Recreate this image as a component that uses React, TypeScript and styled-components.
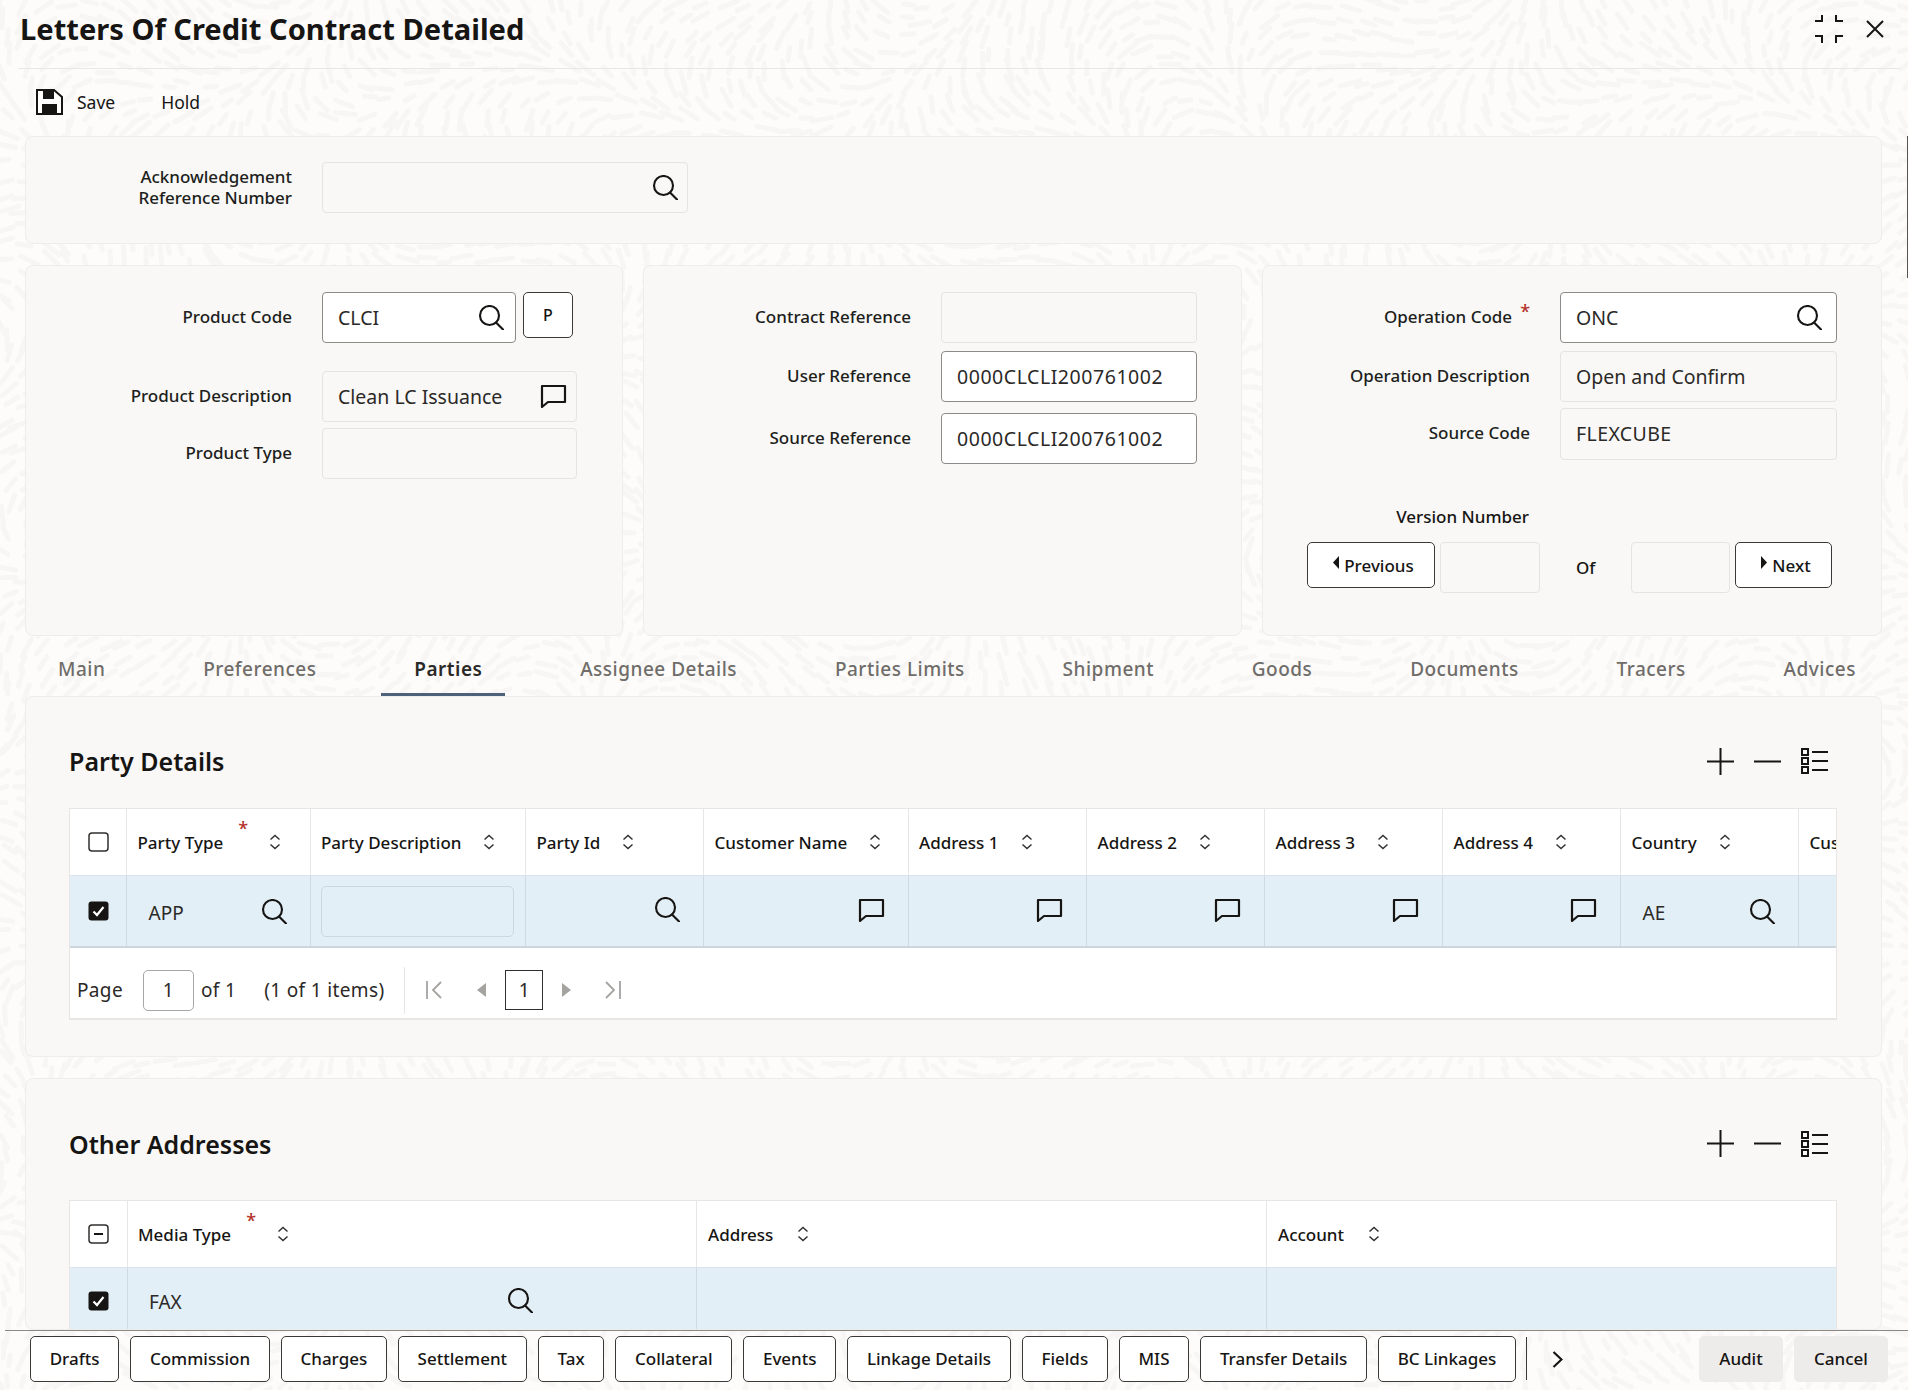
import React, { useMemo } from "react";
import styled, { createGlobalStyle } from "styled-components";

const Global = createGlobalStyle`
  html, body { margin: 0; padding: 0; background: #fdfcfb; }
  * { box-sizing: border-box; }
  body { font-family: "Noto Sans", "Liberation Sans", sans-serif; color: #161513; }
`;

const Page = styled.div`
  position: relative; width: 1908px; height: 1390px; overflow: hidden;
  display: flex; flex-direction: column;
`;
const Backdrop = styled.svg`position: absolute; inset: 0; z-index: 0;`;
const Layer = styled.div`
  position: relative; z-index: 1; flex: 1; min-height: 0; overflow: hidden;
  display: flex; flex-direction: column;
  & > * { flex-shrink: 0; }
`;
const Header = styled.header`
  height: 69px; margin: 0 9px 0 18px; border-bottom: 1px solid #e9e7e5;
  display: flex; align-items: flex-start; justify-content: space-between;
`;
const Title = styled.h1`
  margin: 10px 0 0 2px; font-size: 29.1px; line-height: 38px; font-weight: 700;
`;
const WindowIcons = styled.div`display: flex; gap: 23px; margin: 15px 15px 0 0; align-items: center;`;
const Toolbar = styled.div`
  height: 67px; padding: 0 0 2px 36px; display: flex; align-items: center;
`;
const ToolText = styled.span<{ $ml: number }>`
  margin-left: ${p => p.$ml}px; font-size: 17.5px; line-height: 24px;
`;
const Panel = styled.section<{ $h?: number }>`
  background: #f9f8f6; border: 1px solid #efedeb; border-radius: 8px;
  ${p => (p.$h ? `height: ${p.$h}px;` : "")}
`;
const TopPanel = styled(Panel)`margin: 0 26px 0 25px; padding-top: 25px;`;
const Columns = styled.div`
  display: flex; gap: 20px; margin: 21px 26px 0 25px;
`;
const Column = styled(Panel)<{ $w: number }>`width: ${p => p.$w}px; padding-top: 26px;`;
const Row = styled.div<{ $mt?: number }>`
  display: flex; align-items: flex-start; margin-top: ${p => p.$mt ?? 0}px;
`;
const Label = styled.label<{ $w: number; $pt?: number }>`
  width: ${p => p.$w}px; flex-shrink: 0; margin-right: 30px; text-align: right;
  font-size: 17px; line-height: 21px; padding-top: ${p => p.$pt ?? 13.5}px; font-weight: 500; color: #201e1c;
`;
const Star = styled.span`
  display: inline-block; color: #b3312a; font-size: 18px; line-height: 0; position: relative;
`;
const LabelStar = styled(Star)`margin-left: 8px; top: -5px;`;
const Input = styled.div<{ $w: number; $h?: number; $on?: boolean; $strong?: boolean; $pr?: number; $ls?: number; $ml?: number }>`
  width: ${p => p.$w}px; height: ${p => p.$h ?? 51}px; flex-shrink: 0;
  margin-left: ${p => p.$ml ?? 0}px;
  border-radius: 4px; padding: 0 ${p => p.$pr ?? 14}px 1px 15px;
  border: 1px solid ${p => (p.$strong ? "#8d8b88" : "#e6e4e1")};
  background: ${p => (p.$on ? "#fff" : "#f9f8f6")};
  display: flex; align-items: center; justify-content: space-between;
  font-size: 19.5px; letter-spacing: ${p => p.$ls ?? 0}px; color: #2b2927;
`;
const Button = styled.button<{ $w?: number; $ml?: number; $pl?: number }>`
  height: 46px; ${p => (p.$w ? `width: ${p.$w}px;` : "")}
  margin-left: ${p => p.$ml ?? 0}px;
  flex-shrink: 0; border: 1px solid #3a3937; border-radius: 5px; background: #fff;
  font: 500 17px "Noto Sans", sans-serif; color: #161513; padding: 0 0 0 ${p => p.$pl ?? 0}px;
  display: inline-flex; align-items: center; justify-content: center; gap: 5px;
`;
const PBtn = styled(Button)`font-size: 16px;`;
const TriUp = styled.span`display: inline-flex; margin-top: -5px;`;
const Version = styled.div`
  display: flex; align-items: flex-start; margin: 0 0 0 44px;
`;
const VersionLabel = styled.div`
  margin: 45px 0 13px; padding-right: 352px; text-align: right; font-size: 17px; line-height: 24px; font-weight: 500;
`;
const OfText = styled.span`
  width: 91px; padding: 14px 0 0 36px; font-size: 17px; line-height: 24px; font-weight: 500;
`;
const Tabs = styled.nav`
  height: 60px; margin-left: 58px; padding: 20px 0 0 0; display: flex; gap: 97.8px;
`;
const Tab = styled.span<{ $on?: boolean }>`
  position: relative; font-size: 19px; letter-spacing: 0.5px; line-height: 26px; height: 40px; white-space: nowrap;
  color: ${p => (p.$on ? "#2a2826" : "#6f6c69")}; font-weight: ${p => (p.$on ? 600 : 500)};
  ${p => p.$on ? `&::after { content: ""; position: absolute; left: -33px; right: -23px; bottom: 0; height: 3px; background: #4f6079; }` : ""}
`;
const SectionPanel = styled(Panel)<{ $mt?: number }>`
  margin: ${p => p.$mt ?? 0}px 26px 0 25px; padding: 0 44px 0 43px;
`;
const SectionHead = styled.div<{ $h: number; $pt: number }>`
  height: ${p => p.$h}px; padding-top: ${p => p.$pt}px;
  display: flex; align-items: center; justify-content: space-between;
`;
const SectionTitle = styled.h2`
  margin: 0; font-size: 25px; line-height: 32px; font-weight: 600;
`;
const Tools = styled.div`display: flex; align-items: center; gap: 20px; margin-right: 9px;`;
const Table = styled.div`
  background: #fff; border: 1px solid #e8e6e4; border-bottom-width: 2px; overflow: hidden;
`;
const BareTable = styled(Table)`border-bottom: 0;`;
const TRow = styled.div<{ $h: number; $sel?: boolean }>`
  display: flex; height: ${p => p.$h}px; width: max-content;
  background: ${p => (p.$sel ? "#e3eff6" : "#fff")};
  ${p => (p.$sel ? "border-top: 1px solid #dde4e9;" : "")}
`;
const BottomRule = styled.div`height: 2px; background: #cdd6dc;`;
const Cell = styled.div<{ $w: number; $sel?: boolean; $pt?: number }>`
  width: ${p => p.$w}px; flex-shrink: 0; display: flex; align-items: center; position: relative;
  padding-top: ${p => p.$pt ?? 0}px;
  border-right: 1px solid ${p => (p.$sel ? "#cfdae1" : "#e8e6e4")};
`;
const HeadCell = styled(Cell)<{ $pl?: number }>`
  padding-left: ${p => p.$pl ?? 10.5}px; font-size: 17px; font-weight: 500; white-space: nowrap;
`;
const CheckCell = styled(Cell)`padding-left: 18px;`;
const BodyCell = styled(Cell)`
  padding-left: 21.5px; padding-right: 23px; justify-content: space-between; font-size: 19px; color: #2b2927;
`;
const StartCell = styled(BodyCell)`justify-content: flex-start;`;
const EndCell = styled(BodyCell)`justify-content: flex-end; padding-bottom: 3px;`;
const CellInput = styled.div`
  width: 193px; height: 51px; flex-shrink: 0; margin-left: -11px; border: 1px solid #ccd7de; border-radius: 5px; background: #e3eff6;
`;
const CellText = styled.span`padding-top: 3px;`;
const HeadStar = styled(Star)`margin: 0 0 0 15px; width: 9px; top: -14px;`;
const SortWrap = styled.span<{ $ml?: number }>`
  margin-left: ${p => p.$ml ?? 22}px; display: inline-flex;
`;
const Pager = styled.div`
  height: 70px; display: flex; align-items: center; padding: 14px 0 0 7px; font-size: 19px; letter-spacing: 0.35px; color: #2b2927;
`;
const PagerInput = styled.div`
  width: 51px; height: 41px; margin-left: 20px; border: 1px solid #a9a7a4; border-radius: 5px;
  display: flex; align-items: center; justify-content: center;
`;
const PagerItems = styled.span`margin-left: 28px;`;
const PagerOf = styled.span`margin-left: 7px;`;
const PagerDivider = styled.div`width: 1px; height: 47px; background: #e8e6e4; margin: 0 21px 0 20px;`;
const PageBox = styled.div`
  width: 38px; height: 40px; margin: 0 19px; border: 1px solid #2f2e2c;
  display: flex; align-items: center; justify-content: center;
`;
const PageNav = styled.span<{ $ml?: number; $mr?: number }>`
  display: inline-flex; margin-left: ${p => p.$ml ?? 0}px; margin-right: ${p => p.$mr ?? 0}px;
`;
const Footer = styled.footer`
  position: relative; z-index: 2; height: 60px; flex-shrink: 0; margin-left: 5px;
  border-top: 1px solid #8b8986; padding: 5px 20px 0 25px;
  display: flex; align-items: flex-start; gap: 11px;
`;
const FootBtn = styled(Button)`padding: 0 18.7px 2px; white-space: nowrap;`;
const FootDivider = styled.div`width: 1px; height: 43px; background: #3a3937; margin: 1px 0 0 -1px;`;
const Chevron = styled.span`display: inline-flex; margin: 15px 0 0 14px;`;
const FootSpacer = styled.div`flex: 1;`;
const GhostBtn = styled.button<{ $w: number }>`
  height: 46px; width: ${p => p.$w}px; border: 0; border-radius: 5px; background: #eeecea;
  font: 500 17px "Noto Sans", sans-serif; color: #161513; padding: 0 0 2px;
`;
const ScrollEdge = styled.div`
  position: absolute; z-index: 3; top: 136px; right: 0; width: 1px; height: 142px; background: #55534f;
`;
const Ico = styled.svg`display: block; flex-shrink: 0;`;

const Search = () => (
  <Ico width="26" height="25" viewBox="0 0 26 25" fill="none" stroke="#161513" strokeWidth="2.1">
    <ellipse cx="11.5" cy="10.5" rx="9.5" ry="9.5" />
    <path d="M18 17.5L25 24.5" strokeLinecap="round" />
  </Ico>
);
const Msg = () => (
  <Ico width="27" height="24" viewBox="0 0 27 24" fill="none" stroke="#161513" strokeWidth="2.2" strokeLinejoin="round">
    <path d="M2 2H25V18H8L2 23Z" />
  </Ico>
);
const Sort = () => (
  <Ico width="12" height="16" viewBox="0 0 12 16" fill="none" stroke="#33312f" strokeWidth="1.5">
    <path d="M1.5 5.5L6 1.5L10.5 5.5M1.5 10.5L6 14.5L10.5 10.5" />
  </Ico>
);
const SortS = ({ ml }: { ml?: number }) => <SortWrap $ml={ml}><Sort /></SortWrap>;
const Check = ({ on, minus }: { on?: boolean; minus?: boolean }) => (
  <Ico width="21" height="20" viewBox="0 0 21 20">
    {on ? (
      <>
        <rect x="0.5" y="0.5" width="20" height="19" rx="3" fill="#161513" />
        <path d="M5.5 10.5L9 14L15.5 6" fill="none" stroke="#fff" strokeWidth="2.2" />
      </>
    ) : (
      <>
        <rect x="1" y="1" width="19" height="18" rx="3" fill="#fff" stroke="#33312f" strokeWidth="1.5" />
        {minus && <path d="M6 10H15" stroke="#161513" strokeWidth="2" />}
      </>
    )}
  </Ico>
);
const SaveIcon = () => (
  <Ico width="27" height="26" viewBox="0 0 27 26">
    <path d="M1 1H18L26 8V25H1Z" fill="#fff" stroke="#161513" strokeWidth="2" />
    <rect x="7" y="1" width="11" height="9" fill="#161513" />
    <rect x="6" y="15" width="15" height="10" fill="#161513" />
  </Ico>
);
const Collapse = () => (
  <Ico width="28" height="28" viewBox="0 0 28 28" fill="none" stroke="#161513" strokeWidth="2">
    <path d="M0 6H7V0M21 0V6H28M0 21H7V28M21 28V21H28" />
  </Ico>
);
const Close = () => (
  <Ico width="18" height="18" viewBox="0 0 18 18" fill="none" stroke="#161513" strokeWidth="2">
    <path d="M1 1L17 17M17 1L1 17" />
  </Ico>
);
const Plus = () => (
  <Ico width="27" height="27" viewBox="0 0 27 27" fill="none" stroke="#161513" strokeWidth="2"><path d="M0 13.5H27M13.5 0V27" /></Ico>
);
const Minus = () => (
  <Ico width="27" height="27" viewBox="0 0 27 27" fill="none" stroke="#161513" strokeWidth="2"><path d="M0 13.5H27" /></Ico>
);
const ListIcon = () => (
  <Ico width="27" height="26" viewBox="0 0 27 26" fill="none" stroke="#161513" strokeWidth="2">
    <rect x="1" y="1" width="6" height="6" /><rect x="1" y="10" width="6" height="6" /><rect x="1" y="19" width="6" height="6" />
    <path d="M11 4H27M11 13H27M11 22H27" />
  </Ico>
);
const First = () => (
  <Ico width="16" height="18" viewBox="0 0 16 18" fill="none" stroke="#a5a3a0" strokeWidth="1.8"><path d="M1 0V18M15 1L7 9L15 17" /></Ico>
);
const Last = () => (
  <Ico width="16" height="18" viewBox="0 0 16 18" fill="none" stroke="#a5a3a0" strokeWidth="1.8"><path d="M15 0V18M1 1L9 9L1 17" /></Ico>
);
const Tri = ({ right, c = "#a5a3a0", w = 9, h = 14 }: { right?: boolean; c?: string; w?: number; h?: number }) => (
  <Ico width={w} height={h} viewBox="0 0 9 14" preserveAspectRatio="none"><path d={right ? "M0 0L9 7L0 14Z" : "M9 0L0 7L9 14Z"} fill={c} /></Ico>
);
const ChevronIcon = () => (
  <Ico width="11" height="17" viewBox="0 0 11 17" fill="none" stroke="#161513" strokeWidth="2.2"><path d="M1.5 1L9.5 8.5L1.5 16" /></Ico>
);

const Pattern = () => {
  const d = useMemo(() => {
    let seed = 7;
    const rnd = () => { seed = (seed * 16807) % 2147483647; return seed / 2147483647; };
    const parts: string[] = [];
    for (let y = 0; y < 1400; y += 16) {
      for (let x = 0; x < 1920; x += 20) {
        const px = x + rnd() * 12;
        const py = y + rnd() * 9;
        const a = Math.sin(px / 95) * 1.7 + Math.cos(py / 70) * 1.5 + Math.sin((px + py) / 210) * 1.2;
        const l = 5 + rnd() * 6;
        const dx = Math.cos(a) * l;
        const dy = Math.sin(a) * l;
        parts.push(`M${(px - dx).toFixed(1)} ${(py - dy).toFixed(1)}L${(px + dx).toFixed(1)} ${(py + dy).toFixed(1)}`);
      }
    }
    return parts.join("");
  }, []);
  return (
    <Backdrop width="1908" height="1390" viewBox="0 0 1908 1390" fill="none">
      <path d={d} stroke="#f7f6f4" strokeWidth="5" strokeLinecap="round" />
    </Backdrop>
  );
};

const partyCols = [
  { t: "Party Type", w: 183.5, star: true },
  { t: "Party Description", w: 215.5 },
  { t: "Party Id", w: 178 },
  { t: "Customer Name", w: 204.5 },
  { t: "Address 1", w: 178.5 },
  { t: "Address 2", w: 178 },
  { t: "Address 3", w: 178 },
  { t: "Address 4", w: 178 },
  { t: "Country", w: 178 },
];
const footBtns = ["Drafts", "Commission", "Charges", "Settlement", "Tax", "Collateral", "Events", "Linkage Details", "Fields", "MIS", "Transfer Details", "BC Linkages"];
const tabs = ["Main", "Preferences", "Parties", "Assignee Details", "Parties Limits", "Shipment", "Goods", "Documents", "Tracers", "Advices"];

export default function App() {
  return (
    <Page>
      <Global />
      <Pattern />
      <ScrollEdge />
      <Layer>
        <Header>
          <Title>Letters Of Credit Contract Detailed</Title>
          <WindowIcons><Collapse /><Close /></WindowIcons>
        </Header>
        <Toolbar>
          <SaveIcon />
          <ToolText $ml={14}>Save</ToolText>
          <ToolText $ml={46}>Hold</ToolText>
        </Toolbar>
        <TopPanel $h={108}>
          <Row>
            <Label $w={266} $pt={3.5}>Acknowledgement<br />Reference Number</Label>
            <Input $w={366} $pr={9}><span /><Search /></Input>
          </Row>
        </TopPanel>
        <Columns>
          <Column $w={598} $h={371}>
            <Row>
              <Label $w={266}>Product Code</Label>
              <Input $w={194} $on $strong $pr={11}>CLCI<Search /></Input>
              <PBtn $w={50} $ml={7}>P</PBtn>
            </Row>
            <Row $mt={28}>
              <Label $w={266}>Product Description</Label>
              <Input $w={255} $pr={9}>Clean LC Issuance<Msg /></Input>
            </Row>
            <Row $mt={6}>
              <Label $w={266}>Product Type</Label>
              <Input $w={255} />
            </Row>
          </Column>
          <Column $w={599} $h={371}>
            <Row>
              <Label $w={267}>Contract Reference</Label>
              <Input $w={256} />
            </Row>
            <Row $mt={8}>
              <Label $w={267}>User Reference</Label>
              <Input $w={256} $on $strong $ls={0.55}>0000CLCLI200761002</Input>
            </Row>
            <Row $mt={11}>
              <Label $w={267}>Source Reference</Label>
              <Input $w={256} $on $strong $ls={0.55}>0000CLCLI200761002</Input>
            </Row>
          </Column>
          <Column $w={620} $h={371}>
            <Row>
              <Label $w={267}>Operation Code<LabelStar>*</LabelStar></Label>
              <Input $w={277} $on $strong>ONC<Search /></Input>
            </Row>
            <Row $mt={8}>
              <Label $w={267}>Operation Description</Label>
              <Input $w={277}>Open and Confirm</Input>
            </Row>
            <Row $mt={6}>
              <Label $w={267}>Source Code</Label>
              <Input $w={277} $h={52} $ls={0.4}>FLEXCUBE</Input>
            </Row>
            <VersionLabel>Version Number</VersionLabel>
            <Version>
              <Button $w={128} $pl={5}><TriUp><Tri c="#161513" w={6} h={13} /></TriUp>Previous</Button>
              <Input $w={100} $ml={5} />
              <OfText>Of</OfText>
              <Input $w={99} />
              <Button $w={97} $ml={5} $pl={5}><TriUp><Tri right c="#161513" w={6} h={13} /></TriUp>Next</Button>
            </Version>
          </Column>
        </Columns>
        <Tabs>
          {tabs.map(t => <Tab key={t} $on={t === "Parties"}>{t}</Tab>)}
        </Tabs>
        <SectionPanel $h={361}>
          <SectionHead $h={111} $pt={17}>
            <SectionTitle>Party Details</SectionTitle>
            <Tools><Plus /><Minus /><ListIcon /></Tools>
          </SectionHead>
          <Table>
            <TRow $h={66}>
              <CheckCell $w={57}><Check /></CheckCell>
              {partyCols.map(c => (
                <HeadCell key={c.t} $w={c.w}>
                  {c.t}{c.star && <HeadStar>*</HeadStar>}<SortS />
                </HeadCell>
              ))}
              <HeadCell $w={178}>Customer</HeadCell>
            </TRow>
            <TRow $h={71} $sel>
              <CheckCell $w={57} $sel><Check on /></CheckCell>
              <BodyCell $w={183.5} $sel><CellText>APP</CellText><Search /></BodyCell>
              <BodyCell $w={215.5} $sel><CellInput /></BodyCell>
              <EndCell $w={178} $sel><Search /></EndCell>
              <EndCell $w={204.5} $sel><Msg /></EndCell>
              <EndCell $w={178.5} $sel><Msg /></EndCell>
              <EndCell $w={178} $sel><Msg /></EndCell>
              <EndCell $w={178} $sel><Msg /></EndCell>
              <EndCell $w={178} $sel><Msg /></EndCell>
              <BodyCell $w={178} $sel><CellText>AE</CellText><Search /></BodyCell>
              <BodyCell $w={178} $sel />
            </TRow>
            <BottomRule />
            <Pager>
              Page
              <PagerInput>1</PagerInput>
              <PagerOf>of 1</PagerOf>
              <PagerItems>(1 of 1 items)</PagerItems>
              <PagerDivider />
              <First />
              <PageNav $ml={35}><Tri /></PageNav>
              <PageBox>1</PageBox>
              <Tri right />
              <PageNav $ml={34}><Last /></PageNav>
            </Pager>
          </Table>
        </SectionPanel>
        <SectionPanel $mt={21}>
          <SectionHead $h={121} $pt={8}>
            <SectionTitle>Other Addresses</SectionTitle>
            <Tools><Plus /><Minus /><ListIcon /></Tools>
          </SectionHead>
          <BareTable>
            <TRow $h={66}>
              <CheckCell $w={57.5}><Check minus /></CheckCell>
              <HeadCell $w={569}>Media Type<HeadStar>*</HeadStar><SortS /></HeadCell>
              <HeadCell $w={570} $pl={11.5}>Address<SortS ml={24} /></HeadCell>
              <HeadCell $w={570} $pl={11.5}>Account<SortS ml={24} /></HeadCell>
            </TRow>
            <TRow $h={62} $sel>
              <CheckCell $w={57.5} $sel $pt={4}><Check on /></CheckCell>
              <StartCell $w={569} $sel $pt={4}>
                <CellText>FAX</CellText>
                <PageNav $ml={325}><Search /></PageNav>
              </StartCell>
              <BodyCell $w={570} $sel />
              <BodyCell $w={570} $sel />
            </TRow>
          </BareTable>
        </SectionPanel>
      </Layer>
      <Footer>
        {footBtns.map(b => <FootBtn key={b}>{b}</FootBtn>)}
        <FootDivider />
        <Chevron><ChevronIcon /></Chevron>
        <FootSpacer />
        <GhostBtn $w={84}>Audit</GhostBtn>
        <GhostBtn $w={94}>Cancel</GhostBtn>
      </Footer>
    </Page>
  );
}
